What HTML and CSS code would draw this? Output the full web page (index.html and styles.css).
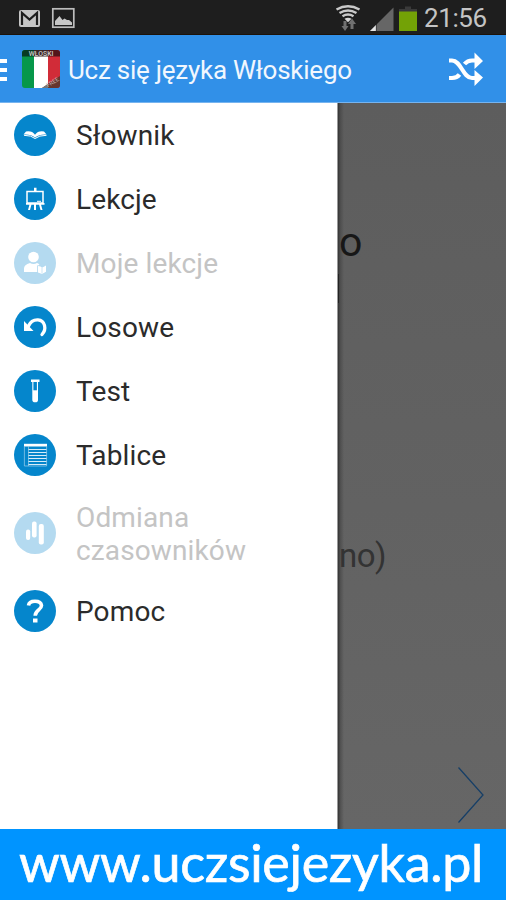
FILE: index.html
```html
<!DOCTYPE html>
<html lang="pl">
<head>
<meta charset="utf-8">
<title>Ucz się języka Włoskiego</title>
<link rel="stylesheet" href="styles.css">
</head>
<body>
<div class="screen">
  <div class="status">
    <svg class="notif" width="60" height="35" viewBox="0 0 60 35">
      <rect x="4" y="10" width="21" height="17" rx="2" fill="#c6c6c6"/>
      <path d="M7 25V13l7.500 6.500L22 13v12" fill="none" stroke="#1e1e1e" stroke-width="2.200"/>
      <rect x="37.800" y="8.800" width="21" height="18.400" fill="none" stroke="#bdbdbd" stroke-width="1.700"/>
      <path d="M40 25v-4l4.500-5 3 4 2-1.500 2.500 1.500h2l3 2.500V25z" fill="#c6c6c6"/>
    </svg>
    <svg class="signals" width="90" height="35" viewBox="0 0 90 35">
      <g fill="none" stroke="#c9c9c9" stroke-width="2.500">
        <path d="M4.500 9.500q11.500-6.500 23 0"/>
        <path d="M7.500 13q8.500-5 17 0"/>
        <path d="M10.500 16.200q5.500-3.300 11 0"/>
      </g>
      <path d="M12.500 18.700q3.500-2 7 0L16 22.300z" fill="#d5d5d5"/>
      <path d="M11.500 21h3v5h2l-3.500 5-3.500-5h2zM18.500 29h3v-5H24l-4-5.500-4 5.500h2.500z" fill="#707070"/>
      <path d="M38 31L61.500 7.500V31z" fill="#666"/>
      <path d="M38 31l6-6v6z" fill="#e4e4e4"/>
      <path d="M44.300 24v7" stroke="#1e1e1e" stroke-width=".6"/>
      <path d="M73 6.500h6V9h6v3H67V9h6z" fill="#3a3a3a"/>
      <rect x="67" y="11.500" width="18" height="19.500" fill="#73a206"/>
    </svg>
    <span class="clock">21:56</span>
  </div>
  <header class="appbar">
    <span class="burger"><i></i><i></i><i></i></span>
    <svg class="logo" width="38" height="38" viewBox="0 0 38 38">
      <defs><clipPath id="tile"><rect width="38" height="38" rx="3"/></clipPath></defs>
      <g clip-path="url(#tile)">
        <path d="M0 0h12v38H0z" fill="#06974a"/><path d="M12 0h14v38H12z" fill="#fff"/><path d="M26 0h12v38H26z" fill="#d12c38"/>
        <path d="M0 0h12v6.500H0z" fill="#073c22"/><path d="M12 0h14v6.500H12z" fill="#3d2525"/><path d="M26 0h12v6.500H26z" fill="#53151b"/>
        <path d="M38 26v12H20z" fill="#64352f"/><path d="M20 38l6-4v4z" fill="#777"/>
        <text x="19" y="5.600" class="logo-name">WŁOSKI</text>
        <text x="26" y="37.500" class="logo-free" transform="rotate(-32 26 37.500)">FREE</text>
      </g>
    </svg>
    <h1 class="title">Ucz się języka Włoskiego</h1>
    <svg class="shuffle" width="36" height="36" viewBox="0 0 36 36">
      <g fill="none" stroke="#fff" stroke-width="4.200">
        <path d="M1 9.500h3c9 0 11 17.500 20 17.500h4"/>
        <path d="M1 27h3q5 0 7.500-3.500M16.500 13q3-3.500 7.500-3.500h4"/>
      </g>
      <path d="M26.500 1.500l8.500 8.500-8.500 8zM26.500 19l8.500 7.500-8.500 8.500z" fill="#fff"/>
    </svg>
  </header>
  <main class="content">
    <nav class="drawer">
      <a class="item"><svg class="ico" viewBox="0 0 42 42"><circle cx="21" cy="21" r="21"/><path class="f" d="M12 17.500q6-1 9 3.200 3-4.200 9-3.200l2.500 3q-7-.5-11.500 3-4-3.500-11.500-3z"/><path class="l" d="M10 21.300q7.500 0 11 3.200 4-3.200 11.500-3.200"/></svg><span>Słownik</span></a>
      <a class="item"><svg class="ico" viewBox="0 0 42 42"><circle cx="21" cy="21" r="21"/><path class="f" d="M20 9.800h2.500V13H20zM12 25h18.500v1.800H12zM15.500 26.500h2l-1.500 5.500h-2zM20 26.500h2V32h-2zM25 26.500h2l1.500 5.500h-2z"/><path d="M13 13.500h16V25H13z" fill="none" stroke="#fff" stroke-width="1.500"/><path class="l" d="M23 23.300h4"/></svg><span>Lekcje</span></a>
      <a class="item off"><svg class="ico" viewBox="0 0 42 42"><circle cx="21" cy="21" r="21"/><circle class="f" cx="19.500" cy="15" r="5.300"/><path class="f" d="M10 30v-3.500q0-4 6-5.500 3.500 2 7 0 2 .5 2.500 2l-2 .5V30zM24 24q3 0 4 1.700l4-2.200v6.300L28 32l-4-1.500z"/><path d="M23.500 23.500V30M28 26v5.500" fill="none" stroke="#b4daf0" stroke-width=".7"/></svg><span>Moje lekcje</span></a>
      <a class="item"><svg class="ico" viewBox="0 0 42 42"><circle cx="21" cy="21" r="21"/><path d="M14.500 20c2-4.500 6-6.300 9.500-6.100 7 .6 9 9.100 4 14.600" fill="none" stroke="#fff" stroke-width="3.300" stroke-linecap="round"/><path class="f" d="M10 15v10h9.500z"/></svg><span>Losowe</span></a>
      <a class="item"><svg class="ico" viewBox="0 0 42 42"><circle cx="21" cy="21" r="21"/><path class="f" d="M17 9.500h8.500V12H24v18q0 2.300-2.800 2.300T18.300 30V12H17z"/><path d="M19.400 12h3.500v8.300h-3.500z" fill="#0586cc"/></svg><span>Test</span></a>
      <a class="item"><svg class="ico" viewBox="0 0 42 42"><circle cx="21" cy="21" r="21"/><path class="f" d="M10 9.800h23v2.700H10z"/><path d="M10.400 12v20h22.200V12M14.500 12v20" fill="none" stroke="#9dd0ec" stroke-width=".7"/><path class="l thin" d="M14.500 15.500h18M14.500 18.500h18M14.500 21.500h18M14.500 24.500h18M14.500 27.500h18M14.500 30.500h18"/></svg><span>Tablice</span></a>
      <a class="item off tall"><svg class="ico" viewBox="0 0 42 42"><circle cx="21" cy="21" r="21"/><rect class="f" x="12" y="17.500" width="4.200" height="10.500" rx="2"/><rect class="f" x="18" y="9.500" width="4.600" height="16" rx="2"/><rect class="f" x="24.800" y="12" width="5" height="20.500" rx="2"/></svg><span>Odmiana<br>czasowników</span></a>
      <a class="item"><svg class="ico" viewBox="0 0 42 42"><circle cx="21" cy="21" r="21"/><path d="M14.500 15.500Q15 11.300 21 11.300t6.500 4.200c0 4.500-6.300 4.500-6.300 10.300" fill="none" stroke="#fff" stroke-width="3.600"/><path class="f" d="M19 28.500h4.500v4H19z"/></svg><span>Pomoc</span></a>
    </nav>
    <section class="page">
      <p class="word">o</p>
      <p class="bar"></p>
      <p class="note">no)</p>
      <svg class="next" width="28" height="58" viewBox="0 0 28 58"><path d="M1.500 1.500L26 29 1.500 56.500" fill="none" stroke="#173f67" stroke-width="1.300"/></svg>
    </section>
  </main>
  <footer class="footer"><span>www.uczsiejezyka.pl</span></footer>
</div>
</body>
</html>
```
FILE: styles.css
```css
* { box-sizing: border-box; }
body, p, h1 { margin: 0; }
body { font-family: Roboto, "Liberation Sans", sans-serif; background: #fff; }
.screen { width: 506px; height: 900px; display: flex; flex-direction: column; overflow: hidden; }
.status { height: 35px; background: #1e1e1e; border-bottom: 1px solid #1c1209; display: flex; align-items: flex-start; padding-left: 15px; }
.signals { margin-left: 257px; }
.clock { margin-left: 2px; color: #c4c4c4; font-size: 26px; line-height: 36px; letter-spacing: -0.4px; }
.appbar { height: 68px; background: #3190e8; border-bottom: 1px solid #76b4ef; display: flex; align-items: center; }
.burger { width: 7px; display: flex; flex-direction: column; gap: 5px; padding-top: 2px; }
.burger i { height: 4px; background: #fff; }
.logo { margin-left: 15px; }
.logo-name { font-size: 6.8px; font-weight: 500; fill: #ccc; text-anchor: middle; }
.logo-free { font-size: 6px; fill: #c8b5b1; }
.title { margin-left: 8px; padding-top: 2px; font-size: 26px; font-weight: 400; letter-spacing: -0.25px; color: #f1f7fe; white-space: nowrap; width: 380px; }
.shuffle { flex: none; }
.content { height: 726px; display: flex; }
.drawer { width: 338px; background: #fff; border-right: 1px solid #999; }
.item { height: 64px; display: flex; align-items: center; padding-left: 14px; color: #2b2b2b; font-size: 28px; line-height: 33px; letter-spacing: 0.13px; }
.tall { height: 92px; }
.item span { margin-left: 20px; padding-top: 1px; }
.ico { width: 42px; height: 42px; flex: none; fill: #0586cc; }
.off { color: #c4c4c4; }
.off .ico { fill: #b4daf0; }
.ico .f { fill: #fff; }
.ico .l { fill: none; stroke: #fff; stroke-width: 1; }
.ico .thin { stroke: #d6ecf8; }
.page { flex: 1; display: flex; flex-direction: column; background: linear-gradient(90deg, #333 0, rgba(64,64,64,.6) 2px, rgba(90,90,90,0) 6px), linear-gradient(#5d5d5d, #666); }
.word { margin-top: 117px; height: 44px; padding-left: 1px; font-size: 41px; line-height: 44px; color: #171717; }
.bar { margin-top: 10px; width: 1px; height: 29px; background: #222; }
.note { margin-top: 233px; padding-left: 1px; font-size: 33px; line-height: 40px; letter-spacing: -0.5px; color: #333; }
.next { margin: 190px 0 0 119px; }
.footer { height: 71px; background: #0094ff; color: #fff; font-family: Lato, sans-serif; font-size: 52px; line-height: 67px; letter-spacing: -0.3px; padding-left: 19px; white-space: nowrap; -webkit-text-stroke: 0.7px #fff; }
```
